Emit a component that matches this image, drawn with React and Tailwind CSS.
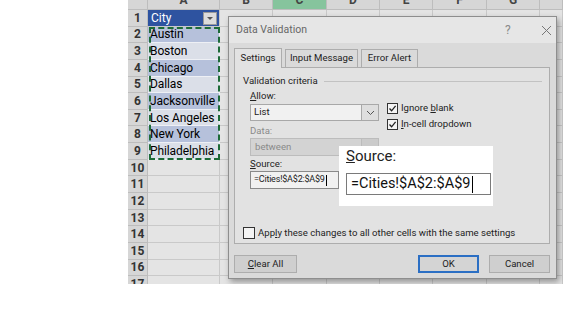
import React from "react"

const cols = [
  { w: "w-[72px]", l: "A" },
  { w: "w-[53px]", l: "B" },
  { w: "w-[54px]", l: "C" },
  { w: "w-[53px]", l: "D" },
  { w: "w-[53px]", l: "E" },
  { w: "w-[54px]", l: "F" },
  { w: "w-[53px]", l: "G" },
  { w: "w-[23px]", l: "" },
]

const cities = ["City", "Austin", "Boston", "Chicago", "Dallas", "Jacksonville", "Los Angeles", "New York", "Philadelphia"]
const rows = Array.from({ length: 17 }, (_, i) => i + 1)

function Chevron() {
  return (
    <svg width="9" height="6" viewBox="0 0 9 6">
      <path d="M1 1 L4.5 4.5 L8 1" fill="none" stroke="#555" strokeWidth="1" />
    </svg>
  )
}

function Check({ checked }) {
  return (
    <div className="w-[11px] h-[11px] border border-[#333] bg-[#f4f4f4] flex items-center justify-center shrink-0">
      {checked && (
        <svg width="9" height="9" viewBox="0 0 9 9">
          <path d="M1.5 4.5 L3.6 6.8 L7.6 1.8" fill="none" stroke="#222" strokeWidth="1.3" />
        </svg>
      )}
    </div>
  )
}

function CellA({ r }) {
  const text = cities[r - 1]
  if (r === 1) {
    return (
      <div className="w-[72px] h-full bg-[#2e53a0] border-r border-b border-[#c9c9c9] flex items-center pl-[3px] relative">
        <span className="text-white text-[12px]">{text}</span>
        <div className="absolute right-[2px] top-[2px] w-[14px] h-[13px] bg-[#dcdcdc] border border-[#9a9a9a] flex items-center justify-center">
          <div className="w-0 h-0 border-l-[3px] border-r-[3px] border-t-[3px] border-l-transparent border-r-transparent border-t-[#555]" />
        </div>
      </div>
    )
  }
  if (!text) return <div className="w-[72px] h-full bg-[#e4e4e4] border-r border-b border-[#c9c9c9]" />
  const bg = r % 2 === 0 ? "bg-[#b6c1db]" : "bg-[#dbdfe8]"
  return (
    <div className={`w-[72px] h-full ${bg} border-r border-b border-[#eef0f5] flex items-center pl-[2px] overflow-hidden`}>
      <span className="text-black text-[12px] tracking-[-0.1px] whitespace-nowrap">{text}</span>
    </div>
  )
}

function Sheet() {
  return (
    <div className="w-[435px] h-[284px] relative overflow-hidden bg-[#e4e4e4] font-['Roboto',sans-serif]">
      <div className="flex h-[10px]">
        <div className="w-[20px] h-full bg-[#d6d6d6] border-r border-b border-[#bdbdbd]" />
        {cols.map(c => (
          <div
            key={c.l || "x"}
            className={`${c.w} h-full ${c.l === "C" ? "bg-[#86c49d]" : "bg-[#d6d6d6]"} border-r border-b border-[#bdbdbd] overflow-hidden flex items-end justify-center`}
          >
            <span className="text-[12px] leading-none font-bold text-[#444] pb-[3px]">{c.l}</span>
          </div>
        ))}
      </div>
      {rows.map(r => (
        <div key={r} className="flex h-[16.65px]">
          <div className="w-[20px] h-full bg-[#d6d6d6] border-r border-b border-[#bdbdbd] flex items-center justify-center">
            <span className="text-[12px] font-bold text-[#333]">{r}</span>
          </div>
          <CellA r={r} />
          {cols.slice(1).map(c => (
            <div key={c.l || "x"} className={`${c.w} h-full border-r border-b border-[#c9c9c9]`} />
          ))}
        </div>
      ))}

      <div className="absolute left-[21px] top-[27px] w-[71px] h-[133px] border-2 border-dashed border-[#1d6b38]" />

      <Dialog />
    </div>
  )
}

function Dialog() {
  return (
    <div className="absolute left-[100px] top-[16px] w-[329px] h-[263px] border border-[#8e8e8e] shadow-[2px_3px_6px_rgba(0,0,0,0.35)] flex flex-col font-['Roboto',sans-serif] text-[9.6px] text-[#222]">
      <div className="h-[26px] bg-[#e6e6e6] flex items-center pl-[7px]">
        <span className="text-[10.5px] text-[#666]">Data Validation</span>
        <span className="ml-[198px] text-[12px] text-[#8a8a8a]">?</span>
        <svg className="ml-[30px]" width="11" height="11" viewBox="0 0 11 11">
          <path d="M1 1 L10 10 M10 1 L1 10" stroke="#777" strokeWidth="1" />
        </svg>
      </div>

      <div className="flex-1 bg-[#dadada] pl-[5px] pr-[6px] pt-[4px] pb-[5px] flex flex-col relative">
        <div className="flex items-end h-[20px]">
          <div className="w-[48px] h-[20px] border border-b-0 border-[#adadad] bg-[#e2e2e2] -mb-px relative z-10 flex items-center justify-center">
            Settings
          </div>
          <div className="ml-[3px] w-[73px] h-[18px] border border-b-0 border-[#adadad] flex items-center justify-center">
            Input Message
          </div>
          <div className="ml-[3px] w-[57px] h-[18px] border border-b-0 border-[#adadad] flex items-center justify-center">
            Error Alert
          </div>
        </div>

        <div className="h-[177px] border border-[#adadad] bg-[#e2e2e2] flex flex-col">
          <div className="flex items-center pt-[7px] pl-[8px] pr-[7px]">
            <span className="leading-[12px]">Validation criteria</span>
            <div className="flex-1 h-px bg-[#c2c2c2] ml-[6px]" />
          </div>

          <div className="flex pl-[15px]">
            <div className="w-[129px] flex flex-col">
              <span className="mt-[3px] leading-[12px]"><u>A</u>llow:</span>
              <div className="mt-[2px] h-[17px] border border-[#a8a8a8] bg-[#f1f1f1] flex items-center">
                <span className="pl-[3px] flex-1">List</span>
                <div className="w-[17px] h-full border-l border-[#a8a8a8] bg-[#dedede] flex items-center justify-center">
                  <Chevron />
                </div>
              </div>
              <span className="mt-[4px] leading-[12px] text-[#8a8a8a]">Data:</span>
              <div className="mt-[1px] h-[18px] border border-[#bcbcbc] bg-[#d3d3d3] flex items-center">
                <span className="pl-[4px] flex-1 text-[#8a8a8a]">between</span>
                <div className="w-[17px] h-full border-l border-[#bcbcbc] bg-[#cbcbcb]" />
              </div>
              <span className="mt-[2px] leading-[12px]"><u>S</u>ource:</span>
              <div className="mt-[1px] w-[89px] h-[18px] border border-[#8a8a8a] bg-[#f1f1f1] flex items-center pl-[3px]">
                <span className="text-[9px] tracking-[-0.2px]">=Cities!$A$2:$A$9</span>
                <div className="w-px h-[11px] bg-black ml-px" />
              </div>
            </div>
            <div className="ml-[8px] pt-[13px] flex flex-col">
              <div className="h-[16px] flex items-center gap-[3px]">
                <Check checked />
                <span>Ignore <u>b</u>lank</span>
              </div>
              <div className="h-[16px] flex items-center gap-[3px]">
                <Check checked />
                <span><u>I</u>n-cell dropdown</span>
              </div>
            </div>
          </div>

          <div className="mt-auto mb-[4px] pl-[8px] flex items-center gap-[3px] h-[12px]">
            <div className="w-[12px] h-[12px] border border-[#333] bg-[#f4f4f4]" />
            <span>App<u>l</u>y these changes to all other cells with the same settings</span>
          </div>
        </div>

        <div className="mt-[11px] flex items-center">
          <div className="w-[63px] h-[18px] border border-[#adadad] bg-[#cfcfcf] flex items-center justify-center">
            <span><u>C</u>lear All</span>
          </div>
          <div className="ml-auto w-[61px] h-[18px] border-2 border-[#2b6fc4] bg-[#d4d4d4] flex items-center justify-center">
            OK
          </div>
          <div className="ml-[10px] w-[61px] h-[18px] border border-[#adadad] bg-[#cfcfcf] flex items-center justify-center">
            Cancel
          </div>
        </div>

        <div className="absolute left-[110px] top-[103px] w-[154px] h-[60px] bg-white pl-[7px] pr-[2px] pt-px flex flex-col">
          <span className="text-[15px] leading-[18px] text-[#222]"><u>S</u>ource:</span>
          <div className="mt-[8px] h-[22px] border border-[#7a7a7a] flex items-center pl-[4px]">
            <span className="text-[14.5px] text-[#111]">=Cities!$A$2:$A$9</span>
            <div className="w-px h-[17px] bg-black ml-[2px]" />
          </div>
        </div>
      </div>
    </div>
  )
}

export default function App() {
  return (
    <div className="w-[570px] h-[310px] bg-white flex">
      <div className="w-[128px] shrink-0" />
      <Sheet />
    </div>
  )
}
